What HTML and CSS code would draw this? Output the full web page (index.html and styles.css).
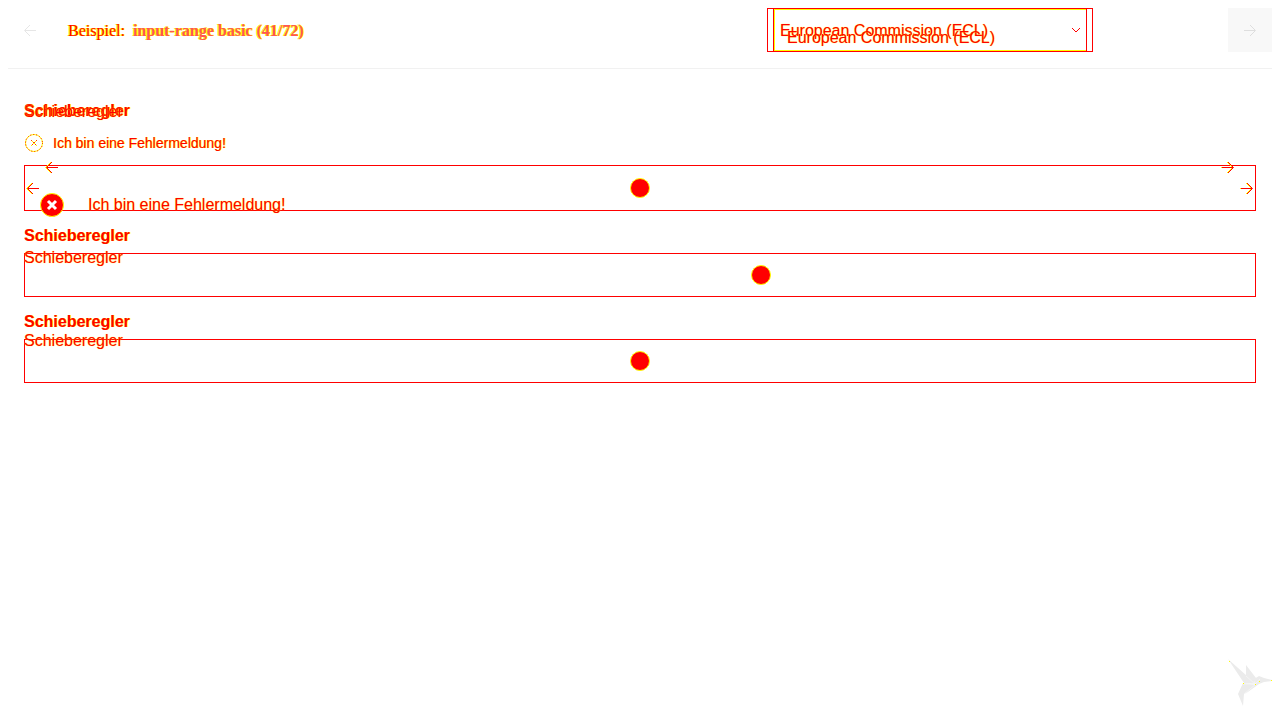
FILE: index.html
```html
<!DOCTYPE html>
<html lang="de">
<head>
<meta charset="utf-8">
<meta name="viewport" content="width=device-width, initial-scale=1">
<title>input-range basic</title>
<link rel="stylesheet" href="styles.css">
</head>
<body>
<svg class="defs" aria-hidden="true">
  <symbol id="left" viewBox="0 0 12 12"><path d="M12 6.5H1M6 1L.5 6.5L6 12"/></symbol>
  <symbol id="right" viewBox="0 0 12 12"><path d="M0 6.5H11M6 1L11.5 6.5L6 12"/></symbol>
</svg>
<header class="header">
  <button class="nav" aria-label="Zurück"><svg class="arrow"><use href="#left"/></svg></button>
  <h1 class="title">Beispiel: &nbsp;<b>input-range basic (41/72)</b></h1>
  <div class="theme">
    <select class="select" aria-label="Theme"><option>European Commission (ECL)</option></select>
    <span class="theme-inner" aria-hidden="true">European Commission (ECL)</span>
    <svg class="chevron" viewBox="0 0 10 6" aria-hidden="true"><path d="M1 1L5 5L9 1"/></svg>
  </div>
  <button class="nav next" aria-label="Weiter"><svg class="arrow"><use href="#right"/></svg></button>
</header>
<main class="main">
  <section class="field">
    <label class="label" for="r1">Schieberegler</label>
    <span class="echo echo-near" aria-hidden="true">Schieberegler</span>
    <p class="error">
      <svg class="error-icon" viewBox="0 0 20 20" aria-hidden="true"><circle class="halo" cx="10" cy="10" r="8.5"/><circle class="dots" cx="10" cy="10" r="8.5"/><path class="halo" d="M7 7L13 13M13 7L7 13"/><path class="dots" d="M7 7L13 13M13 7L7 13"/></svg>
      Ich bin eine Fehlermeldung!
    </p>
    <div class="control">
      <input class="range tall" id="r1" type="range" min="0" max="100" value="50">
      <svg class="arrow mark inner-left" aria-hidden="true"><use href="#left"/></svg>
      <svg class="arrow mark inner-right" aria-hidden="true"><use href="#right"/></svg>
      <svg class="arrow mark upper-left" aria-hidden="true"><use href="#left"/></svg>
      <svg class="arrow mark upper-right" aria-hidden="true"><use href="#right"/></svg>
      <p class="alert">
        <svg class="alert-icon" viewBox="0 0 24 24" aria-hidden="true"><circle cx="12" cy="12" r="11.5"/><path d="M8 8L16 16M16 8L8 16"/></svg>
        Ich bin eine Fehlermeldung!
      </p>
    </div>
  </section>
  <section class="field">
    <label class="label" for="r2">Schieberegler</label>
    <span class="echo" aria-hidden="true">Schieberegler</span>
    <input class="range" id="r2" type="range" min="0" max="100" value="60">
  </section>
  <section class="field">
    <label class="label" for="r3">Schieberegler</label>
    <span class="echo echo-last" aria-hidden="true">Schieberegler</span>
    <input class="range" id="r3" type="range" min="0" max="100" value="50">
  </section>
</main>
<svg class="bird" viewBox="0 0 70 70" aria-hidden="true">
  <path class="wing" d="M18 9L46 34L34 33ZM36 15L46 28L44 32L36 26ZM33 33L46 35L34 44L33 56L28 44ZM45 34L44 29L49 26L54 28L62 30V31L54 32L49 34L35 44Z"/>
  <path class="seam" d="M33 34L46 34L34 44M36 26L45 34L50 29"/>
  <path class="spots" d="M19 11h1v1h-1zM33 33h1v1h-1zM45 34h1v1h-1zM49 31h1v1h-1zM61 30h1v1h-1z"/>
</svg>
</body>
</html>
```

FILE: styles.css
```css
* { box-sizing: border-box; }
body {
  margin: 8px;
  background: #fff;
  color: #f00;
  font-family: "Liberation Sans", Arial, sans-serif;
  font-size: 16px;
  line-height: 20px;
}
.defs { position: absolute; width: 0; height: 0; }
.header {
  display: flex;
  align-items: center;
  padding-bottom: 16px;
  border-bottom: 1px solid #f1f1f1;
}
.nav {
  display: flex;
  align-items: center;
  justify-content: center;
  width: 44px;
  height: 44px;
  padding: 0;
  border: 0;
  background: transparent;
  color: #e6e6e6;
}
.next { margin-left: auto; background: #f8f8f8; color: #dedede; }
.arrow { width: 12px; height: 12px; fill: none; stroke: currentColor; stroke-width: 1; overflow: visible; }
.title {
  flex: 1;
  margin: 0;
  padding: 1px 0 0 16px;
  font: 400 16px/20px "Liberation Serif", "Times New Roman", serif;
  text-shadow: 1px 0 #ff0, -1px 0 #ff0;
}
.title b { color: #f55; }
.theme { position: relative; width: 326px; margin-right: 135px; }
.select {
  display: block;
  width: 100%;
  height: 44px;
  padding: 2px 12px 0;
  border: 1px solid #f00;
  border-radius: 0;
  appearance: none;
  background: #fff;
  color: #f00;
  font: inherit;
  text-shadow: 0 0 1px #ff0;
}
.theme-inner {
  position: absolute;
  inset: 0 6px;
  padding: 19px 0 0 13px;
  border: 1px solid #f00;
  box-shadow: inset 1px 1px #ff0, inset 0 -1px #ff0;
  text-shadow: 0 0 1px #ff0;
  white-space: nowrap;
  pointer-events: none;
}
.chevron { position: absolute; top: 19px; right: 12px; width: 10px; height: 6px; fill: none; stroke: #f00; pointer-events: none; }
.main { padding: 32px 16px; }
.field { position: relative; margin-bottom: 15px; }
.label {
  display: block;
  font-weight: 700;
  line-height: 20px;
  text-shadow: 1px 0 #ff0;
}
.echo { position: absolute; top: 22px; left: 0; text-shadow: 0 0 1px #ff0; }
.echo-near { top: 1px; }
.echo-last { top: 19px; }
.error {
  display: flex;
  align-items: center;
  gap: 9px;
  margin: 12px 0;
  font-size: 14px;
  text-shadow: 1px 0 #ff0;
}
.error-icon { width: 20px; height: 20px; fill: none; stroke: #f00; }
.error-icon .halo { stroke: #ff0; }
.error-icon .dots { stroke-dasharray: 1 2; }
.control { position: relative; }
.range {
  display: block;
  width: 100%;
  height: 44px;
  margin: 7px 0 0;
  border: 1px solid #f00;
  appearance: none;
  background: transparent;
}
.tall { height: 46px; margin: 0; }
.range::-webkit-slider-thumb {
  appearance: none;
  width: 20px;
  height: 20px;
  border: 1px solid #ff0;
  border-radius: 50%;
  background: #f00;
}
.mark { position: absolute; pointer-events: none; filter: drop-shadow(-1px 0 #ff0); }
.inner-left { top: 17px; left: 3px; }
.inner-right { top: 17px; right: 3px; }
.upper-left { top: -4px; left: 22px; }
.upper-right { top: -4px; right: 22px; }
.alert {
  position: absolute;
  top: 28px;
  left: 16px;
  display: flex;
  align-items: center;
  gap: 24px;
  margin: 0;
  pointer-events: none;
  text-shadow: 0 0 1px #ff0;
}
.alert-icon { width: 24px; height: 24px; }
.alert-icon circle { fill: #f00; stroke: #ff0; }
.alert-icon path { fill: none; stroke: #fff; stroke-width: 3; }
.bird { position: fixed; right: 0; bottom: 0; width: 70px; height: 70px; }
.wing { fill: #ebebeb; }
.seam { fill: none; stroke: #f4f4f4; }
.spots { fill: #ff0; }
```
